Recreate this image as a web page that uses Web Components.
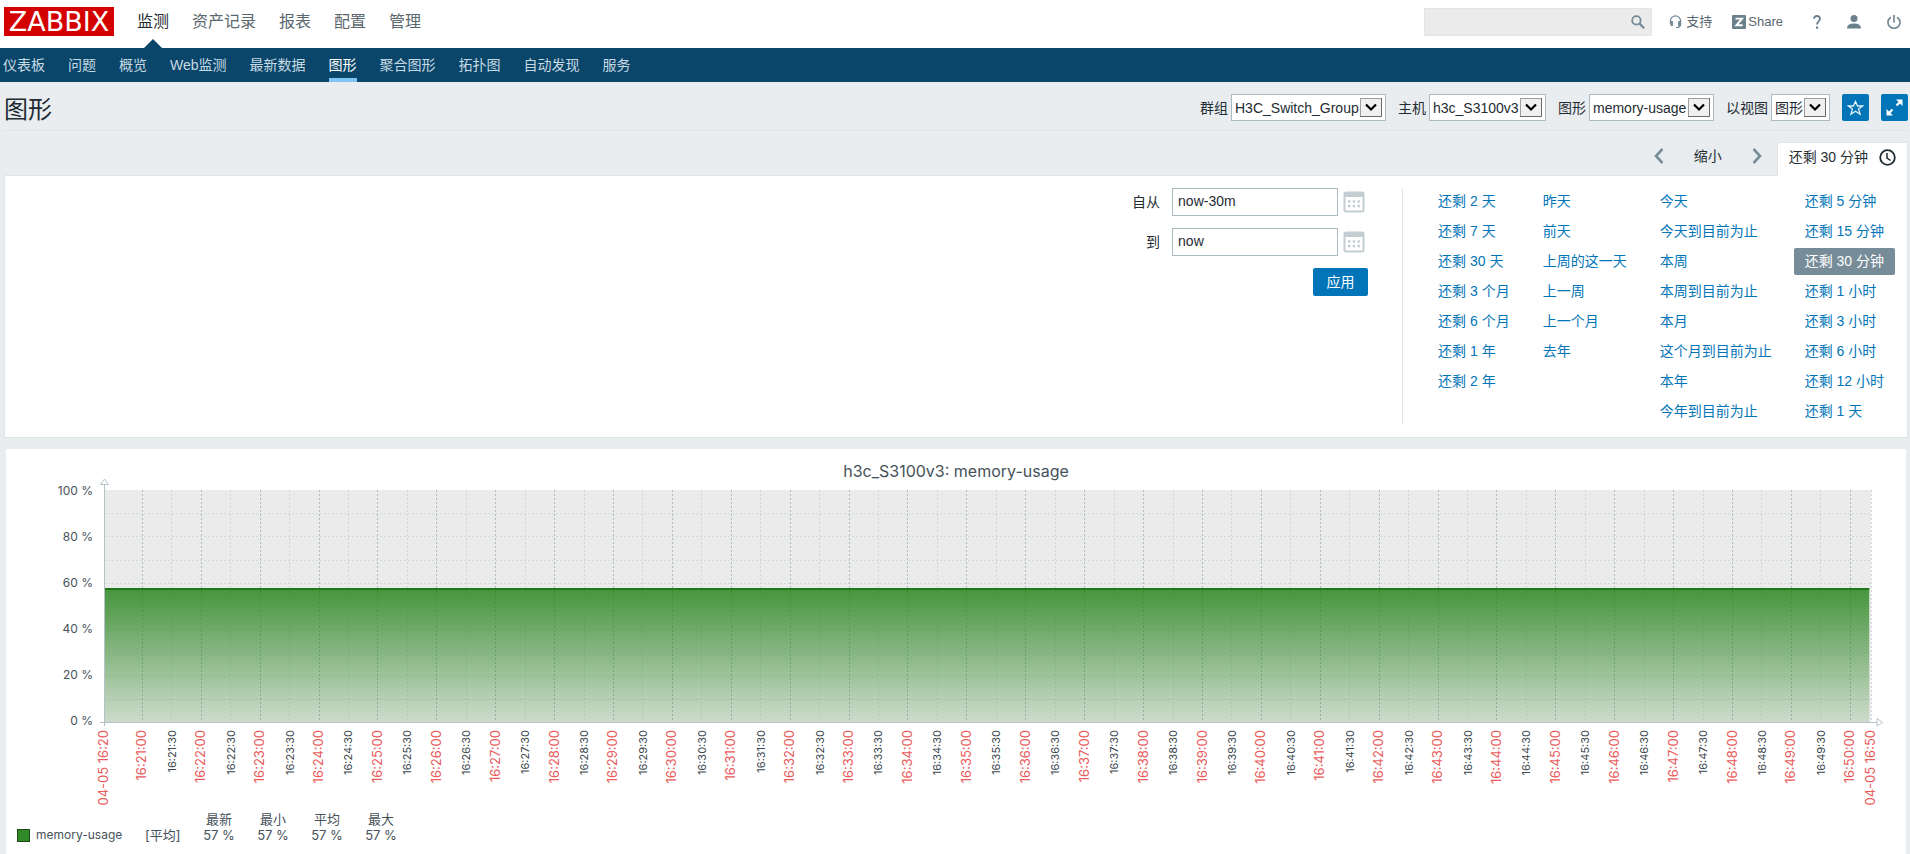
<!DOCTYPE html>
<html lang="zh-CN">
<head>
<meta charset="utf-8">
<title>图形</title>
<style>
  html, body { margin: 0; padding: 0; }
  body {
    min-height: 100vh; display: flex; flex-direction: column;
    background: #e9edf0; color: #1f2c33;
    font: 14px/20px "Liberation Sans", "Noto Sans CJK SC", sans-serif;
  }
  zbx-graph { flex: 1 0 auto; }
</style>
</head>
<body>
<zbx-header></zbx-header>
<zbx-subnav></zbx-subnav>
<zbx-title-bar heading="图形">
  <zbx-select label="群组" value="H3C_Switch_Group"></zbx-select>
  <zbx-select label="主机" value="h3c_S3100v3"></zbx-select>
  <zbx-select label="图形" value="memory-usage"></zbx-select>
  <zbx-select label="以视图" value="图形"></zbx-select>
</zbx-title-bar>
<zbx-time-filter></zbx-time-filter>
<zbx-graph heading="h3c_S3100v3: memory-usage"></zbx-graph>

<script>
const define = (name, render) => customElements.define(name, class extends HTMLElement {
  connectedCallback() {
    if (this.shadowRoot) return;
    this.attachShadow({ mode: 'open' }).innerHTML =
      '<style>:host,*{box-sizing:border-box}a{text-decoration:none}svg{display:block}button{font:inherit;cursor:pointer}</style>' + render(this);
  }
});

define('zbx-header', () => `
<style>
  :host { display: flex; align-items: center; height: 48px; padding: 0 9px 0 4px; background: #fff; }
  .logo { width: 110px; height: 29px; margin-bottom: 5px; background: #d40000; color: #fff; text-align: center;
          font: 27px/29px "DejaVu Sans", sans-serif; }
  nav { display: flex; gap: 23px; margin-left: 23px; align-self: stretch; }
  nav a { position: relative; color: #5a676e; font-size: 16px; line-height: 36px; padding-top: 4px; height: 48px; }
  nav a.on { color: #1f2c33; }
  nav a.on::after { content: ""; position: absolute; left: 50%; bottom: 0; margin-left: -9px;
          border: 9px solid transparent; border-top: 0; border-bottom-color: #0a466a; }
  .tools { display: flex; align-items: center; margin: 0 0 4px auto; font-size: 13px; color: #5a676e; }
  .tools a { color: inherit; display: flex; align-items: center; }
  form { display: flex; align-items: center; width: 228px; height: 28px; margin-right: 17px; padding-right: 6px;
         background: #ebebeb; border: 1px solid #e2e5e7; }
  input { flex: 1; min-width: 0; border: 0; background: none; outline: 0; font: inherit; }
  form button { border: 0; background: none; padding: 0; }
  .sup { gap: 4px; margin-right: 20px; }
  .share { gap: 2px; margin-right: 4px; }
  .ic { margin-left: 26px; }
</style>
<a class="logo" href="#">ZABBIX</a>
<nav><a class="on" href="#">监测</a><a href="#">资产记录</a><a href="#">报表</a><a href="#">配置</a><a href="#">管理</a></nav>
<div class="tools">
  <form><input type="search" aria-label="搜索"><button type="button" aria-label="搜索">
    <svg width="14" height="14" viewBox="0 0 14 14" fill="none" stroke="#748a96"><circle cx="5.4" cy="5.4" r="4.2" stroke-width="1.8"/><path d="M8.6 8.6L13.2 13.2" stroke-width="2.2"/></svg></button></form>
  <a class="sup" href="#"><svg width="13" height="14" viewBox="0 0 13 14" fill="none" stroke="#748a96"><path d="M1.4 8.5V6a5 5 0 0 1 10.200 0V9.500Q11.600 12.500 7 12.700" stroke-width="1.300"/><path d="M1.900 6.500V10.500H3.600V6.500ZM9.500 6.500V10.500H11.100V6.500Z" fill="#748a96" stroke-width="1"/></svg>支持</a>
  <a class="share" href="#"><svg width="14" height="14" viewBox="0 0 14 14"><rect width="14" height="14" rx="1" fill="#6a808c"/><path d="M3.500 3.600H10L4.300 10.300H10.600" fill="none" stroke="#fff" stroke-width="1.900"/></svg>Share</a>
  <a class="ic" href="#" aria-label="帮助"><svg width="8" height="14" viewBox="0 0 8 14"><path d="M1 3.800Q1.200 1 4 1T7 3.700C7 6 4.100 6.300 4.100 9.600" fill="none" stroke="#6a808c" stroke-width="1.800"/><rect x="3" y="11.500" width="2.200" height="2.200" fill="#6a808c"/></svg></a>
  <a class="ic" href="#" aria-label="用户"><svg width="14" height="14" viewBox="0 0 14 14" fill="#6a808c"><circle cx="7" cy="3.600" r="3.500"/><path d="M0 13.500C0 9.800 3.500 8.600 7 8.600S14 9.800 14 13.500Z"/></svg></a>
  <a class="ic" href="#" aria-label="退出"><svg width="14" height="14" viewBox="0 0 14 14" fill="none" stroke="#748a96" stroke-width="1.700"><path d="M3.900 2.300A6 6 0 1 0 10.100 2.300M7 0V7.500"/></svg></a>
</div>`);

define('zbx-subnav', () => `
<style>
  :host { display: flex; gap: 23px; height: 34px; padding: 0 3px; background: #0a466a; }
  a { color: #c8dae4; line-height: 34px; height: 34px; white-space: nowrap; }
  a.on { color: #fff; box-shadow: inset 0 -4px #7ec4f5; }
</style>
${['仪表板','问题','概览','Web监测','最新数据','图形','聚合图形','拓扑图','自动发现','服务']
  .map(t => `<a href="#"${t === '图形' ? ' class="on"' : ''}>${t}</a>`).join('')}`);

define('zbx-title-bar', el => `
<style>
  :host { display: flex; align-items: center; gap: 12px; height: 49px; margin: 0 2px 0 4px;
          padding-top: 3px; border-bottom: 1px solid #dfe4e7; }
  h1 { margin: 0 auto 0 0; font-size: 24px; line-height: 32px; font-weight: 400; padding-top: 4px; }
  button { width: 27px; height: 27px; padding: 0; border: 0; border-radius: 2px; background: #0275b8;
           display: grid; place-items: center; }
  slot { display: contents; }
</style>
<h1>${el.getAttribute('heading')}</h1>
<slot></slot>
<button aria-label="收藏"><svg width="17" height="16" viewBox="0 0 17 16"><path d="M8.500 1.400L10.600 6H15.600L11.600 9.100L13.100 14.300L8.500 11.300L3.900 14.300L5.400 9.100L1.400 6H6.400Z" fill="none" stroke="#e3f1fa" stroke-width="1.300"/></svg></button>
<button aria-label="全屏"><svg width="17" height="17" viewBox="0 0 17 17" fill="#fff" stroke="#fff"><path d="M10 0.500H16.500V7ZM0.500 10V16.500H7Z" stroke="none"/><path d="M10.500 6.500L14 3M3 14L6.500 10.500" stroke-width="2.200"/></svg></button>`);

define('zbx-select', el => `
<style>
  :host { display: flex; align-items: center; gap: 3px; }
  .box { position: relative; display: flex; background: #fff; border: 1px solid #acbbc2; }
  select { appearance: none; border: 0; outline: 0; background: none; height: 25px; padding: 0 26px 0 3px;
           color: inherit; font: inherit; }
  svg { position: absolute; right: 3px; top: 3px; pointer-events: none; }
</style>
<label for="s">${el.getAttribute('label')}</label>
<span class="box"><select id="s"><option>${el.getAttribute('value')}</option></select>
<svg width="22" height="19" viewBox="0 0 22 19"><rect x="0.500" y="0.500" width="21" height="18" fill="#f0f0f0" stroke="#a0a0a0"/><path d="M21.500 0V18.500H0" fill="none" stroke="#696969"/><path d="M6 6.500L11 11.500L16 6.500" fill="none" stroke="#000" stroke-width="2.200"/></svg></span>`);

const ranges = [
  ['还剩 2 天','还剩 7 天','还剩 30 天','还剩 3 个月','还剩 6 个月','还剩 1 年','还剩 2 年'],
  ['昨天','前天','上周的这一天','上一周','上一个月','去年'],
  ['今天','今天到目前为止','本周','本周到目前为止','本月','这个月到目前为止','本年','今年到目前为止'],
  ['还剩 5 分钟','还剩 15 分钟','还剩 30 分钟','还剩 1 小时','还剩 3 小时','还剩 6 小时','还剩 12 小时','还剩 1 天'],
];
const calendar = `<svg width="22" height="22" viewBox="0 0 22 22"><rect x="1.500" y="1.500" width="19" height="19" rx="1.500" fill="#fff" stroke="#c3ced3" stroke-width="2"/><path d="M1 1H21V6H1Z" fill="#c3ced3"/><path d="M5 10.500H17.500M5 15H17.500" stroke="#c3ced3" stroke-width="2.500" stroke-dasharray="2.500 2.200"/></svg>`;

define('zbx-time-filter', () => `
<style>
  :host { display: block; margin: 0 2px 0 4px; }
  .bar { display: flex; justify-content: flex-end; align-items: flex-end; padding-top: 11px; }
  .step { display: flex; align-items: center; gap: 30px; height: 28px; margin: 0 15px 5px 0; }
  .step button { border: 0; background: none; padding: 0; color: inherit; }
  .tab { position: relative; display: flex; align-items: center; gap: 11px; height: 34px; padding: 0 11px 5px;
         margin-bottom: -1px; background: #fff; border: 1px solid #dfe4e7; border-bottom: 0;
         border-radius: 2px 2px 0 0; color: inherit; }
  .panel { display: flex; justify-content: flex-end; padding: 12px; background: #fff; border: 1px solid #dfe4e7; }
  form { display: flex; flex-direction: column; gap: 12px; align-items: flex-end; margin-right: 34px; }
  .row { display: flex; align-items: center; height: 28px; padding-right: 3px; }
  .row label { margin-right: 12px; }
  .row input { width: 166px; height: 28px; margin-right: 5px; padding: 0 5px 3px; border: 1px solid #acbbc2;
               font: inherit; color: inherit; background: #fff; }
  .row button { border: 0; background: none; padding: 0; }
  .apply { width: 55px; height: 28px; padding: 0; border: 0; border-radius: 2px; background: #0275b8; color: #fff; }
  .ranges { display: flex; gap: 11px; padding-left: 24px; border-left: 1px solid #dfe4e7; }
  .col { display: flex; flex-direction: column; align-items: flex-start; gap: 3px; }
  .col a { color: #0275b8; line-height: 27px; padding: 0 11px; border-radius: 2px; white-space: nowrap; }
  .col a.on { background: #768d99; color: #fff; }
</style>
<div class="bar">
  <div class="step">
    <button aria-label="向前"><svg width="10" height="16" viewBox="0 0 10 16"><path d="M8.500 1L2 8L8.500 15" fill="none" stroke="#768d99" stroke-width="2.600"/></svg></button>
    <button>缩小</button>
    <button aria-label="向后"><svg width="10" height="16" viewBox="0 0 10 16"><path d="M1.500 1L8 8L1.500 15" fill="none" stroke="#768d99" stroke-width="2.600"/></svg></button>
  </div>
  <a class="tab" href="#">还剩 30 分钟 <svg width="17" height="17" viewBox="0 0 17 17" fill="none" stroke="#1f2c33"><circle cx="8.500" cy="8.500" r="7.300" stroke-width="1.800"/><path d="M8 4V9L11.500 11.500" stroke-width="1.500"/></svg></a>
</div>
<div class="panel">
  <form>
    <div class="row"><label for="from">自从</label><input id="from" value="now-30m"><button type="button" aria-label="日历">${calendar}</button></div>
    <div class="row"><label for="to">到</label><input id="to" value="now"><button type="button" aria-label="日历">${calendar}</button></div>
    <button type="button" class="apply">应用</button>
  </form>
  <div class="ranges">${ranges.map((c, i) => `<div class="col">${c.map((t, j) =>
    `<a href="#"${i === 3 && j === 2 ? ' class="on"' : ''}>${t}</a>`).join('')}</div>`).join('')}</div>
</div>`);

// Time axis: the window spans 30 minutes and opens 39 seconds before 16:21:00.
const ticks = [];
for (let s = 0; s <= 58; s++) {
  const full = s % 2 === 0;
  ticks.push({ full, at: ((39 + s * 30) / 1800 * 100).toFixed(2) + '%',
    text: `16:${21 + Math.floor(s / 2)}:${full ? '00' : '30'}` });
}
const PLOT = 232;
const tickLabel = (at, text, cls) => `<svg x="${at}" y="${PLOT + 8}" overflow="visible"><text class="${cls}" transform="rotate(-90)" x="0" y="4" text-anchor="end">${text}</text></svg>`;

define('zbx-graph', el => `
<style>
  :host { display: block; margin: 11px 4px 0 6px; padding-top: 12px; background: #fff; color: #46525a;
          font-family: Inter, "Noto Sans CJK SC", sans-serif; }
  h2 { margin: 0 0 9px; font-size: 16px; line-height: 20px; font-weight: 400; text-align: center; }
  .chart { display: grid; grid-template-columns: 98px 1fr 35px; font-size: 12px; }
  .scale { display: flex; flex-direction: column; justify-content: space-between; height: 246px; margin-top: -7px;
           padding-right: 11px; text-align: right; line-height: 16px; }
  .plot { width: 100%; height: 321px; overflow: visible; }
  .plot text { font-size: 11px; fill: #3a464d; }
  .plot text.r { font-size: 13px; fill: #ea5b5b; }
  line { shape-rendering: crispEdges; }
  .minor { stroke: #cfd9dd; stroke-dasharray: 2 2; }
  .major { stroke: #a9bac2; stroke-dasharray: 2 2; }
  .axis { stroke: #b5c3c9; }
  table { border-collapse: collapse; margin-left: 11px; font-size: 13px; line-height: 16px; }
  th, td { padding: 0; font-weight: 400; text-align: center; width: 54px; }
  th.name { width: 128px; text-align: left; font-size: 12px; }
  td.fn { width: 47px; text-align: left; }
  .name span { display: flex; align-items: center; gap: 6px; }
  i { width: 13px; height: 13px; background: #2f8a27; border: 1px solid #1c4a18; }
</style>
<h2>${el.getAttribute('heading')}</h2>
<div class="chart">
  <div class="scale">${[100, 80, 60, 40, 20, 0].map(v => `<span>${v} %</span>`).join('')}</div>
  <svg class="plot">
    <defs><linearGradient id="g" x1="0" y1="0" x2="0" y2="1"><stop offset="0" stop-color="#26841c" stop-opacity=".84"/><stop offset="1" stop-color="#26841c" stop-opacity=".15"/></linearGradient></defs>
    <rect width="100%" height="${PLOT}" fill="#ebebeb"/>
    ${[1,2,3,4,5,6,7,8,9].map(i => `<line class="minor" x1="0" x2="100%" y1="${Math.round(i * PLOT / 10)}" y2="${Math.round(i * PLOT / 10)}"/>`).join('')}
    ${ticks.map(t => `<line class="${t.full ? 'major' : 'minor'}" x1="${t.at}" x2="${t.at}" y1="0" y2="${PLOT}"/>`).join('')}
    <line class="minor" x1="100%" x2="100%" y1="0" y2="${PLOT}"/>
    <rect y="98" width="99.900%" height="134" fill="url(#g)"/>
    <rect y="98" width="99.900%" height="2" fill="#1e7a18"/>
    <line class="axis" x1="0" x2="0" y1="-5" y2="236"/>
    <line class="axis" x1="-4" x2="100%" y1="232" y2="232"/>
    <path d="M-3.500 -5.500L0.500 -11L4.500 -5.500Z" fill="#fff" stroke="#b5c3c9"/>
    <svg x="100%" y="${PLOT}" overflow="visible"><path d="M0 0.500H6M6 -3.500L11.500 0.500L6 4Z" fill="#fff" stroke="#b5c3c9"/></svg>
    ${tickLabel('0', '04-05 16:20', 'r')}
    ${ticks.map(t => tickLabel(t.at, t.text, t.full ? 'r' : '')).join('')}
    ${tickLabel('100%', '04-05 16:50', 'r')}
  </svg>
</div>
<table>
  <thead><tr><td class="name"></td><td class="fn"></td><th>最新</th><th>最小</th><th>平均</th><th>最大</th></tr></thead>
  <tbody><tr><th class="name" scope="row"><span><i></i>memory-usage</span></th><td class="fn">[平均]</td><td>57 %</td><td>57 %</td><td>57 %</td><td>57 %</td></tr></tbody>
</table>`);
</script>
</body>
</html>
